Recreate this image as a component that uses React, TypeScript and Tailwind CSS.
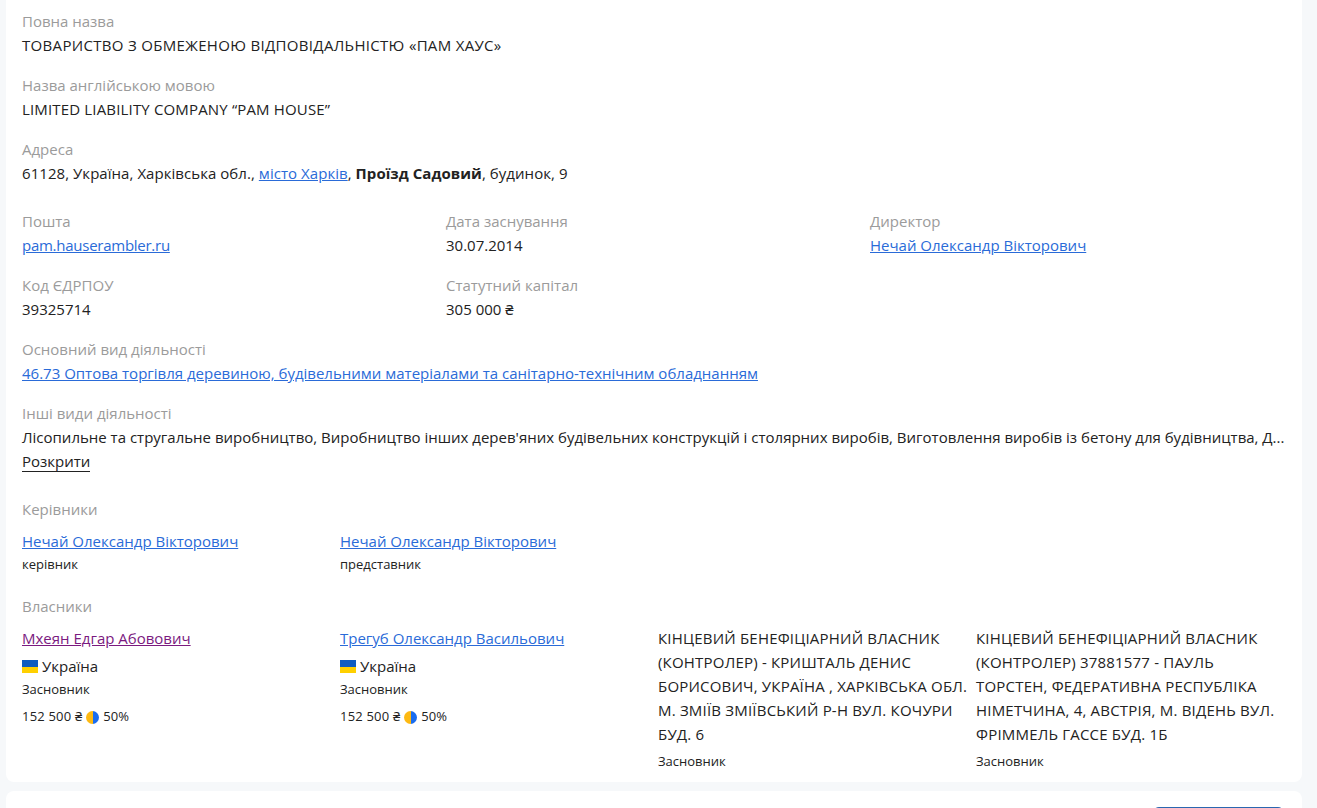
const font = "[font-family:'Open_Sans','Noto_Sans',sans-serif]";

function Label({ children }: { children: React.ReactNode }) {
  return <div className="h-6 leading-6 text-[#9b9b9b]">{children}</div>;
}

function Link({ children, visited }: { children: React.ReactNode; visited?: boolean }) {
  return (
    <a href="#" className={visited ? "text-[#7b1a7f] underline" : "text-[#2a6bd8] underline"}>
      {children}
    </a>
  );
}

function Field({ label, children, className }: { label: string; children: React.ReactNode; className?: string }) {
  return (
    <div className={className}>
      <Label>{label}</Label>
      <div className="h-6 leading-6">{children}</div>
    </div>
  );
}

function Flag() {
  return (
    <span className="flex h-[13px] w-4 flex-col">
      <span className="h-[7px] bg-[#0f5cc0]" />
      <span className="h-[6px] bg-[#ffd000]" />
    </span>
  );
}

function Share() {
  return (
    <span className="flex h-[13px] w-[13px] overflow-hidden rounded-full">
      <span className="w-1/2 bg-[#fdb913]" />
      <span className="w-1/2 bg-[#1a6df0]" />
    </span>
  );
}

function Person({ name, visited }: { name: string; visited?: boolean }) {
  return (
    <div>
      <div className="h-6 leading-6">
        <Link visited={visited}>{name}</Link>
      </div>
      <div className="mt-1 flex h-6 items-center gap-1 leading-6">
        <Flag />
        <span>Україна</span>
      </div>
      <div className="h-[22px] text-[13px] leading-[22px]">Засновник</div>
      <div className="mt-[5px] flex h-6 items-center gap-1 text-[13px]">
        <span className="tracking-[0.2px]">152 500 ₴</span>
        <Share />
        <span>50%</span>
      </div>
    </div>
  );
}

function Beneficiary({ lines }: { lines: string[] }) {
  return (
    <div>
      {lines.map((line) => (
        <div key={line} className="h-6 whitespace-nowrap leading-6 tracking-[0.2px]">
          {line}
        </div>
      ))}
      <div className="mt-[3px] h-6 text-[13px] leading-6">Засновник</div>
    </div>
  );
}

export default function App() {
  return (
    <div className={`h-[808px] overflow-hidden bg-[#f6f8fa] pl-1.5 pr-[15px] text-[15px] text-[#222] ${font}`}>
      <div className="h-[782px] rounded-b-lg bg-white px-4 pt-[9px]">
        <Field label="Повна назва">
          <span className="tracking-[0.32px]">ТОВАРИСТВО З ОБМЕЖЕНОЮ ВІДПОВІДАЛЬНІСТЮ «ПАМ ХАУС»</span>
        </Field>
        <Field label="Назва англійською мовою" className="mt-4">
          <span className="tracking-[0.16px]">LIMITED LIABILITY COMPANY “PAM HOUSE”</span>
        </Field>
        <Field label="Адреса" className="mt-4">
          <span className="tracking-[0.05px]">
            61128, Україна, Харківська обл., <Link>місто Харків</Link>, <b className="font-bold">Проїзд Садовий</b>, будинок, 9
          </span>
        </Field>

        <div className="mt-6 grid grid-cols-[424px_424px_1fr]">
          <div>
            <Field label="Пошта">
              <span className="tracking-[-0.26px]">
                <Link>pam.hauserambler.ru</Link>
              </span>
            </Field>
            <Field label="Код ЄДРПОУ" className="mt-4">
              39325714
            </Field>
          </div>
          <div>
            <Field label="Дата заснування">30.07.2014</Field>
            <Field label="Статутний капітал" className="mt-4">
              305 000 ₴
            </Field>
          </div>
          <Field label="Директор">
            <Link>Нечай Олександр Вікторович</Link>
          </Field>
        </div>

        <Field label="Основний вид діяльності" className="mt-4">
          <Link>46.73 Оптова торгівля деревиною, будівельними матеріалами та санітарно-технічним обладнанням</Link>
        </Field>

        <div className="mt-4">
          <Label>Інші види діяльності</Label>
          <div className="h-6 whitespace-nowrap leading-6">
            Лісопильне та стругальне виробництво, Виробництво інших дерев'яних будівельних конструкцій і столярних виробів, Виготовлення виробів із бетону для будівництва, Д...
          </div>
          <div className="h-6 leading-6">
            <span className="border-b border-[#222]">Розкрити</span>
          </div>
        </div>

        <div className="mt-6">
          <Label>Керівники</Label>
          <div className="mt-2 grid grid-cols-[318px_1fr]">
            <div>
              <div className="h-6 leading-6">
                <Link>Нечай Олександр Вікторович</Link>
              </div>
              <div className="h-[22px] text-[13px] leading-[22px]">керівник</div>
            </div>
            <div>
              <div className="h-6 leading-6">
                <Link>Нечай Олександр Вікторович</Link>
              </div>
              <div className="h-[22px] text-[13px] leading-[22px]">представник</div>
            </div>
          </div>
        </div>

        <div className="mt-[19px]">
          <Label>Власники</Label>
          <div className="mt-2 grid grid-cols-[318px_318px_318px_1fr]">
            <Person name="Мхеян Едгар Абовович" visited />
            <Person name="Трегуб Олександр Васильович" />
            <Beneficiary
              lines={[
                "КІНЦЕВИЙ БЕНЕФІЦІАРНИЙ ВЛАСНИК",
                "(КОНТРОЛЕР) - КРИШТАЛЬ ДЕНИС",
                "БОРИСОВИЧ, УКРАЇНА , ХАРКІВСЬКА ОБЛ.",
                "М. ЗМІЇВ ЗМІЇВСЬКИЙ Р-Н ВУЛ. КОЧУРИ",
                "БУД. 6",
              ]}
            />
            <Beneficiary
              lines={[
                "КІНЦЕВИЙ БЕНЕФІЦІАРНИЙ ВЛАСНИК",
                "(КОНТРОЛЕР) 37881577 - ПАУЛЬ",
                "ТОРСТЕН, ФЕДЕРАТИВНА РЕСПУБЛІКА",
                "НІМЕТЧИНА, 4, АВСТРІЯ, М. ВІДЕНЬ ВУЛ.",
                "ФРІММЕЛЬ ГАССЕ БУД. 1Б",
              ]}
            />
          </div>
        </div>
      </div>

      <div className="mt-[9px] flex h-[60px] justify-end rounded-t-lg bg-white pr-[18px] pt-4">
        <div className="h-10 w-[131px] rounded-t-md bg-[#2a67b0]" />
      </div>
    </div>
  );
}
